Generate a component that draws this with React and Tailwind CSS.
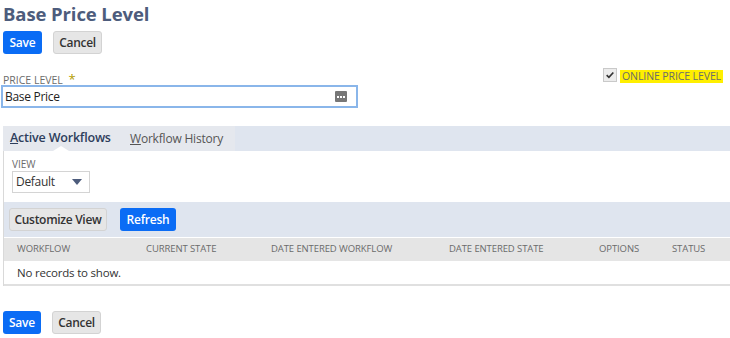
import React from 'react';

const font = { fontFamily: '"Open Sans", "Liberation Sans", sans-serif' };

function BlueButton({ children, className = '' }) {
  return (
    <button className={`flex h-[23px] items-center justify-center rounded-[3px] bg-[#0a6cf5] text-[12px] font-semibold tracking-[-0.2px] text-white ${className}`}>
      {children}
    </button>
  );
}

function GrayButton({ children, className = '' }) {
  return (
    <button className={`flex h-[23px] items-center justify-center rounded-[3px] border border-[#d3d3d3] bg-[#e6e6e6] text-[12px] font-semibold tracking-[-0.3px] text-[#333] ${className}`}>
      {children}
    </button>
  );
}

export default function App() {
  const columns = [
    { label: 'Workflow', w: 'w-[129px]' },
    { label: 'Current State', w: 'w-[125px]' },
    { label: 'Date Entered Workflow', w: 'w-[178px]' },
    { label: 'Date Entered State', w: 'w-[150px]' },
    { label: 'Options', w: 'w-[73px]' },
    { label: 'Status', w: 'flex-1' },
  ];

  return (
    <div className="h-[338px] w-[730px] overflow-hidden bg-white" style={font}>
      {/* Header */}
      <h1 className="pl-[3px] pt-[1px] text-[18.5px] font-bold leading-[25px] tracking-[-0.1px] text-[#4d5c7c]">Base Price Level</h1>
      <div className="mt-[5px] flex gap-[11px] pl-[3px]">
        <BlueButton className="w-[39px]">Save</BlueButton>
        <GrayButton className="w-[49px]">Cancel</GrayButton>
      </div>

      {/* Fields */}
      <div className="mt-[13px] flex items-start justify-between">
        <div className="pl-[1px] pt-[5px]">
          <div className="pl-[2px] text-[10.5px] leading-[14px] text-[#6b6b6b]">
            PRICE LEVEL <span className="ml-[3px] text-[13px] text-[#b39c00]">*</span>
          </div>
          <div className="-mt-[2px] flex h-[23px] w-[357px] items-center justify-between border-2 border-[#8ab6ea] pl-[2px] pr-[9px]">
            <span className="text-[12px] tracking-[-0.3px] text-[#222]">Base Price</span>
            <span className="flex h-[11px] w-[12px] items-center justify-center gap-[1px] rounded-[1px] bg-[#777]">
              <span className="h-[2px] w-[2px] bg-white" />
              <span className="h-[2px] w-[2px] bg-white" />
              <span className="h-[2px] w-[2px] bg-white" />
            </span>
          </div>
        </div>
        <div className="mr-[7px] flex items-center gap-[3px]">
          <span className="flex h-[14px] w-[14px] items-center justify-center border border-[#c9c9c9] bg-[#ececec]">
            <svg viewBox="0 0 12 12" className="h-[10px] w-[10px]">
              <path d="M2 6.2 L4.7 8.8 L10 3" fill="none" stroke="#333" strokeWidth="2" />
            </svg>
          </span>
          <span className="mt-[3px] bg-[#ffef00] px-[2px] text-[10.5px] leading-[13px] tracking-[-0.1px] text-[#6b6b6b]">ONLINE PRICE LEVEL</span>
        </div>
      </div>

      {/* Workflows panel */}
      <div className="ml-[3px] mt-[18px]">
        <div className="flex h-[25px] bg-[#dfe5ef]">
          <div className="flex bg-[#e5e8ee]">
            <div className="relative flex w-[120px] items-center pl-[7px] text-[12.5px] font-semibold tracking-[-0.2px] text-[#2e3e5c]">
              <span><span className="underline">A</span>ctive Workflows</span>
              <span className="absolute bottom-0 left-[50px] h-0 w-0 border-x-[8px] border-b-[5px] border-x-transparent border-b-white" />
            </div>
            <div className="flex w-[112px] items-center pl-[7px] text-[12px] tracking-[-0.2px] text-[#555]">
              <span><span className="underline">W</span>orkflow History</span>
            </div>
          </div>
        </div>
        <div className="border-l border-[#d9d9d9]">
          <div className="h-[51px] pl-[8px] pt-[7px]">
            <div className="text-[10px] leading-[12px] text-[#6b6b6b]">VIEW</div>
            <div className="mt-[1px] flex h-[22px] w-[78px] items-center justify-between border border-[#d4d4d4] pl-[3px] pr-[7px]">
              <span className="text-[12px] tracking-[-0.3px] text-[#333]">Default</span>
              <svg viewBox="0 0 10 6" className="h-[6px] w-[10px]">
                <path d="M0 0 H10 L5 6 Z" fill="#4d5c7c" />
              </svg>
            </div>
          </div>
          <div className="flex h-[35px] items-center gap-[13px] bg-[#dfe5ef] pl-[5px]">
            <GrayButton className="w-[98px]">Customize View</GrayButton>
            <BlueButton className="w-[56px]">Refresh</BlueButton>
          </div>
          <div className="mt-[1px] flex h-[23px] items-center bg-[#e5e5e5] pl-[13px]">
            {columns.map((c) => (
              <div key={c.label} className={`${c.w} text-[9.5px] uppercase tracking-[-0.1px] text-[#6b6b6b]`}>
                {c.label}
              </div>
            ))}
          </div>
          <div className="flex h-[25px] items-center border-b-2 border-[#e0e0e0] pl-[13px] text-[11.5px] tracking-[-0.2px] text-[#333]">
            No records to show.
          </div>
        </div>
      </div>

      {/* Footer */}
      <div className="mt-[25px] flex gap-[11px] pl-[3px]">
        <BlueButton className="w-[38px]">Save</BlueButton>
        <GrayButton className="w-[49px]">Cancel</GrayButton>
      </div>
    </div>
  );
}
